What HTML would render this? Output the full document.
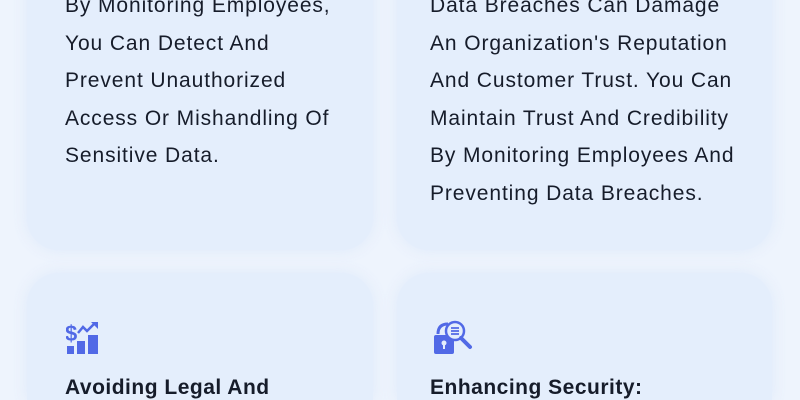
<!DOCTYPE html>
<html><head><style>
html,body{margin:0;padding:0;width:800px;height:400px;overflow:hidden;background:#eef4fd;}
body{position:relative;font-family:"Liberation Sans",sans-serif;color:#161c2a;}
.card{position:absolute;background:#e4eefc;border-radius:32px;box-shadow:0 0 14px rgba(220,232,250,0.9);}
.t{position:absolute;font-size:21px;line-height:37.5px;white-space:nowrap;letter-spacing:0.9px;}
.h{position:absolute;font-size:21px;font-weight:bold;white-space:nowrap;letter-spacing:0.5px;}
</style></head><body>
<div class="card" style="left:27px;top:-40px;width:346px;height:290px"></div>
<div class="card" style="left:397px;top:-40px;width:375px;height:290px"></div>
<div class="card" style="left:27px;top:273px;width:346px;height:127px;border-bottom-left-radius:0;border-bottom-right-radius:0"></div>
<div class="card" style="left:397px;top:273px;width:375px;height:127px;border-bottom-left-radius:0;border-bottom-right-radius:0"></div>
<div class="t" style="left:65px;top:-13px">By Monitoring Employees,<br>You Can Detect And<br>Prevent Unauthorized<br>Access Or Mishandling Of<br>Sensitive Data.</div>
<div class="t" style="left:430px;top:-13px">Data Breaches Can Damage<br>An Organization's Reputation<br>And Customer Trust. You Can<br>Maintain Trust And Credibility<br>By Monitoring Employees And<br>Preventing Data Breaches.</div>
<svg style="position:absolute;left:66px;top:320px" width="34" height="34" viewBox="0 0 34 34">
<text x="-1" y="21" font-family="Liberation Sans" font-weight="bold" font-size="22" fill="#5169e6">$</text>
<path d="M12 13 L17 7 L21 11 L28 4" stroke="#5169e6" stroke-width="2.5" fill="none"/>
<path d="M25 2 L32 2 L32 9 Z" fill="#5169e6"/>
<rect x="1" y="26" width="7" height="8" fill="#5169e6"/><rect x="11" y="21" width="8" height="13" fill="#5169e6"/><rect x="22" y="15" width="10" height="19" fill="#5169e6"/>
</svg>
<svg style="position:absolute;left:433px;top:320px" width="40" height="36" viewBox="0 0 40 36">
<path d="M5 14 Q5 4 15 4" stroke="#5169e6" stroke-width="3" fill="none"/>
<rect x="1" y="15" width="20" height="19" rx="2" fill="#5169e6"/>
<circle cx="11" cy="23" r="2.5" fill="#e4eefc"/><rect x="10" y="23" width="2" height="6" fill="#e4eefc"/>
<circle cx="22" cy="11" r="9" fill="#e4eefc" stroke="#5169e6" stroke-width="2.5"/>
<path d="M18 8h8M18 11h8M18 14h8" stroke="#5169e6" stroke-width="1.8"/>
<path d="M28 18 L37 27" stroke="#5169e6" stroke-width="4" stroke-linecap="round"/>
</svg>
<div class="h" style="left:65px;top:376px">Avoiding Legal And</div>
<div class="h" style="left:430px;top:376px">Enhancing Security:</div>
</body></html>
